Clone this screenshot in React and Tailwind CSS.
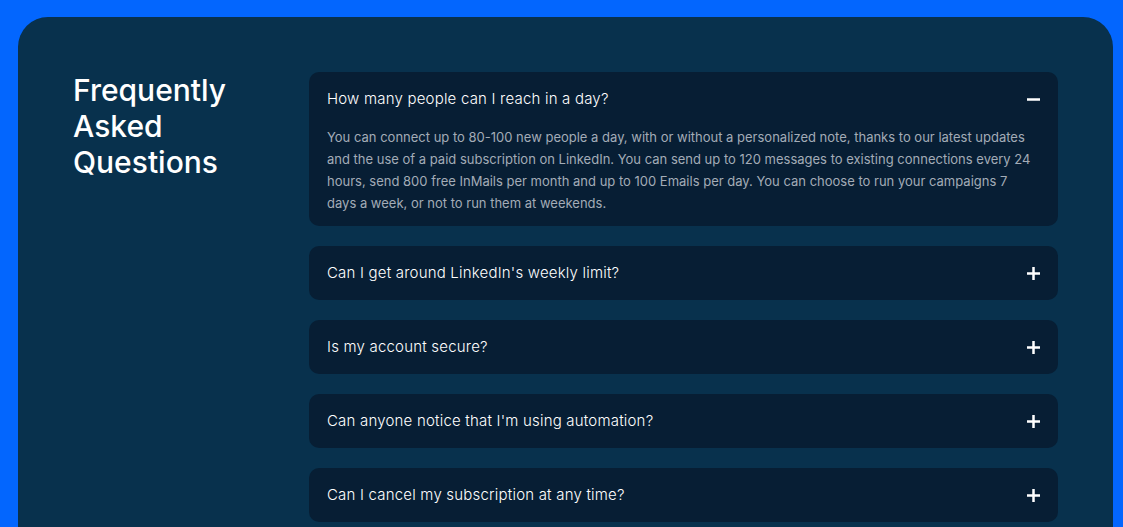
import { useState } from 'react';

const faqs = [
  {
    q: 'How many people can I reach in a day?',
    a: 'You can connect up to 80-100 new people a day, with or without a personalized note, thanks to our latest updates and the use of a paid subscription on LinkedIn. You can send up to 120 messages to existing connections every 24 hours, send 800 free InMails per month and up to 100 Emails per day. You can choose to run your campaigns 7 days a week, or not to run them at weekends.',
  },
  { q: "Can I get around LinkedIn's weekly limit?", a: '' },
  { q: 'Is my account secure?', a: '' },
  { q: "Can anyone notice that I'm using automation?", a: '' },
  { q: 'Can I cancel my subscription at any time?', a: '' },
];

const Icon = ({ open }) => (
  <svg width="13" height="13" viewBox="0 0 13 13" className="shrink-0">
    <rect x="0" y="5.25" width="13" height="2.5" fill="white" />
    {!open && <rect x="5.25" y="0" width="2.5" height="13" fill="white" />}
  </svg>
);

const App = () => {
  const [openIdx, setOpenIdx] = useState(0);

  return (
    <div className="min-h-screen bg-[#0366fe] pt-[17px] px-[10px] overflow-hidden" style={{ fontFamily: 'Inter, "Open Sans", sans-serif' }}>
      <div className="ml-[8px] w-[1095px] min-h-[600px] bg-[#08314d] rounded-[30px] pl-[55px] pt-[55px] flex">
        <h2 className="w-[236px] shrink-0 text-[30px] leading-[36px] font-medium text-white">
          Frequently
          <br />
          Asked
          <br />
          Questions
        </h2>
        <div className="w-[749px] flex flex-col gap-[20px]">
          {faqs.map((f, i) => {
            const open = openIdx === i;
            return (
              <div key={i} className="bg-[#071e34] rounded-[10px]">
                <button
                  onClick={() => setOpenIdx(open ? -1 : i)}
                  className="w-full h-[54px] flex items-center justify-between pl-[18px] pr-[18px] text-left text-[15px] font-light tracking-[0.2px] text-white"
                >
                  <span>{f.q}</span>
                  <Icon open={open} />
                </button>
                {open && (
                  <p className="px-[18px] pb-[12px] text-[13px] leading-[22px] text-[#a3acb7]">{f.a}</p>
                )}
              </div>
            );
          })}
        </div>
      </div>
    </div>
  );
};

export default App;
